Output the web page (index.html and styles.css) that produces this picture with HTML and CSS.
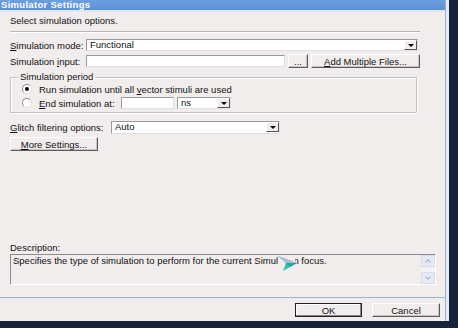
FILE: index.html
```html
<!DOCTYPE html>
<html lang="en">
<head>
  <meta charset="UTF-8" />
  <title>Simulator Settings</title>
  <link rel="stylesheet" href="styles.css">
</head>
<body>
  <div class="window">
    <div class="titlebar"><span>Simulator Settings</span></div>
    <div class="content">
      <p class="intro">Select simulation options.</p>
      <div class="sep"></div>

      <div class="row mode-row">
        <span class="label"><u>S</u>imulation mode:</span>
        <span class="combo combo-mode">Functional<span class="drop"></span></span>
      </div>

      <div class="row input-row">
        <span class="label">Simulation <u>i</u>nput:</span>
        <span class="field field-input"></span>
        <span class="btn btn-dots">...</span>
        <span class="btn btn-add"><u>A</u>dd Multiple Files...</span>
      </div>

      <fieldset class="period">
        <legend>Simulation period</legend>
        <div class="radio-row">
          <span class="radio checked"></span>
          <span>Run simulation until all <u>v</u>ector stimuli are used</span>
        </div>
        <div class="radio-row">
          <span class="radio"></span>
          <span class="end-label"><u>E</u>nd simulation at:</span>
          <span class="field field-end"></span>
          <span class="combo combo-unit">ns<span class="drop"></span></span>
        </div>
      </fieldset>

      <div class="row glitch-row">
        <span class="label label-glitch"><u>G</u>litch filtering options:</span>
        <span class="combo combo-glitch">Auto<span class="drop"></span></span>
      </div>

      <span class="btn btn-more"><u>M</u>ore Settings...</span>

      <div class="description">
        <p class="desc-label">Description:</p>
        <div class="desc-box">
          <span class="desc-text">Specifies the type of simulation to perform for the current Simulation focus.</span>
          <div class="scrollbar">
            <span class="arrow arrow-up"></span>
            <span class="arrow arrow-down"></span>
          </div>
          <!-- mouse pointer caught in the screenshot -->
          <svg class="cursor" width="22" height="17" viewBox="0 0 22 17">
            <rect x="1" y="0" width="17" height="9" fill="#f1eded"/>
            <polygon points="1,1 20,8 6,16 9,8" fill="#2fc4b2"/>
            <polygon points="1,1 20,8 9,8" fill="#b3bad6"/>
            <polygon points="9,8 20,8 13,12" fill="#23a89a"/>
          </svg>
        </div>
      </div>
    </div>
    <div class="footer">
      <span class="btn btn-ok">OK</span>
      <span class="btn btn-cancel">Cancel</span>
    </div>
  </div>
</body>
</html>
```

FILE: styles.css
```css
body {
  margin: 0;
  background: #15243a;
  font-family: 'Liberation Sans', Arial, sans-serif;
  font-size: 9.5px;
  color: #111;
}

.window {
  width: 445px;
  height: 321px;
  display: flex;
  flex-direction: column;
  background: #f1eded;
  border-right: 1px solid #9db0ce;
  box-shadow: 3px 0 0 #e4e9f2;
}

.titlebar {
  height: 10px;
  overflow: hidden;
  background: linear-gradient(#6d9fe0, #5a90d8);
  border-bottom: 2px solid #dfe7f2;
}

.titlebar span {
  display: block;
  padding-left: 1px;
  color: #fff;
  font-weight: bold;
  font-size: 9.5px;
  line-height: 10px;
  letter-spacing: 0.3px;
}

.content {
  flex: 1;
  display: flex;
  flex-direction: column;
  align-items: flex-start;
  padding: 4px 0 12px 10px;
}

.intro {
  margin: 0;
  line-height: 10px;
}

.sep {
  margin-top: 5px;
  width: 410px;
  height: 1px;
  background: #b9b5b5;
  border-bottom: 1px solid #fff;
}

.row {
  display: flex;
  align-items: center;
}

.label {
  width: 76px;
  white-space: nowrap;
}

.mode-row {
  margin-top: 6px;
  height: 12px;
}

.input-row {
  margin-top: 3px;
  height: 14px;
}

.combo, .field {
  position: relative;
  box-sizing: border-box;
  height: 12px;
  line-height: 10px;
  padding-left: 3px;
  background: #fff;
  border: 1px solid #9a9a9a;
  border-right-color: #e0e0e0;
  border-bottom-color: #e0e0e0;
}

.drop {
  position: absolute;
  top: 0;
  right: 0;
  width: 13px;
  height: 10px;
  box-sizing: border-box;
  background: #f1eded;
  border: 1px solid #fff;
  border-right-color: #555;
  border-bottom-color: #555;
}

.drop::after {
  content: "";
  position: absolute;
  left: 3px;
  top: 3px;
  border-left: 3px solid transparent;
  border-right: 3px solid transparent;
  border-top: 3px solid #000;
}

.combo-mode {
  width: 332px;
}

.field-input {
  width: 199px;
}

.btn {
  box-sizing: border-box;
  display: inline-flex;
  align-items: center;
  justify-content: center;
  height: 14px;
  white-space: nowrap;
  background: #f1eded;
  border: 1px solid #fff;
  border-right-color: #5c5c5c;
  border-bottom-color: #5c5c5c;
  box-shadow: inset -1px -1px 0 #c8c4c4;
}

.btn-dots {
  width: 20px;
  margin-left: 3px;
}

.btn-add {
  width: 109px;
  margin-left: 3px;
}

.period {
  margin: 4px 0 0;
  width: 407px;
  box-sizing: border-box;
  padding: 0 0 3px 11px;
  border: 1px solid #c6c2c2;
  box-shadow: inset 1px 1px 0 #fff, 1px 1px 0 #fff;
}

.period legend {
  padding: 0 2px;
  margin-left: -4px;
  line-height: 10px;
}

.radio-row {
  display: flex;
  align-items: center;
  height: 12px;
  margin-top: 1px;
  white-space: nowrap;
}

.radio-row + .radio-row {
  margin-top: 2px;
}

.radio {
  position: relative;
  flex: none;
  width: 8px;
  height: 8px;
  margin-right: 7px;
  border-radius: 50%;
  background: #fff;
  border: 1px solid #8d8d8d;
  border-right-color: #ddd;
  border-bottom-color: #ddd;
}

.radio.checked::after {
  content: "";
  position: absolute;
  left: 2px;
  top: 2px;
  width: 4px;
  height: 4px;
  border-radius: 50%;
  background: #000;
}

.end-label {
  width: 82px;
}

.field-end {
  width: 53px;
}

.combo-unit {
  width: 54px;
  margin-left: 3px;
}

.glitch-row {
  margin-top: 8px;
  height: 13px;
}

.label-glitch {
  width: 101px;
}

.combo-glitch {
  width: 169px;
  height: 13px;
}

.btn-more {
  margin-top: 3px;
  width: 88px;
}

.description {
  margin-top: auto;
}

.desc-label {
  margin: 0;
  line-height: 10px;
}

.desc-box {
  position: relative;
  margin-top: 1px;
  width: 426px;
  height: 31px;
  box-sizing: border-box;
  padding: 1px 16px 0 2px;
  background: #f1eded;
  border: 1px solid #8a8a8a;
  border-right-color: #fff;
  border-bottom-color: #fff;
  line-height: 10px;
}

.scrollbar {
  position: absolute;
  top: 0;
  right: 0;
  bottom: 0;
  width: 14px;
  display: flex;
  flex-direction: column;
  justify-content: space-between;
  background: #f4f2f2;
}

.arrow {
  position: relative;
  height: 12px;
  background: #e6e9f4;
  border: 1px solid #d7dceb;
  box-sizing: border-box;
}

.arrow::after {
  content: "";
  position: absolute;
  left: 4px;
  width: 3px;
  height: 3px;
  border-left: 1px solid #9fb0d6;
  border-top: 1px solid #9fb0d6;
}

.arrow-up::after {
  top: 4px;
  transform: rotate(45deg);
}

.arrow-down::after {
  top: 2px;
  transform: rotate(225deg);
}

.cursor {
  position: absolute;
  left: 266px;
  top: 0;
}

.footer {
  height: 24px;
  display: flex;
  justify-content: flex-end;
  align-items: flex-start;
  gap: 10px;
  padding: 5px 5px 0 0;
  box-sizing: border-box;
  border-top: 1px solid #a5b3c8;
  box-shadow: inset 0 1px 0 #e6ebf3;
}

.btn-ok {
  width: 67px;
  border: 1px solid #222;
  box-shadow: inset -1px -1px 0 #888, inset 1px 1px 0 #fff;
}

.btn-cancel {
  width: 68px;
}
```
